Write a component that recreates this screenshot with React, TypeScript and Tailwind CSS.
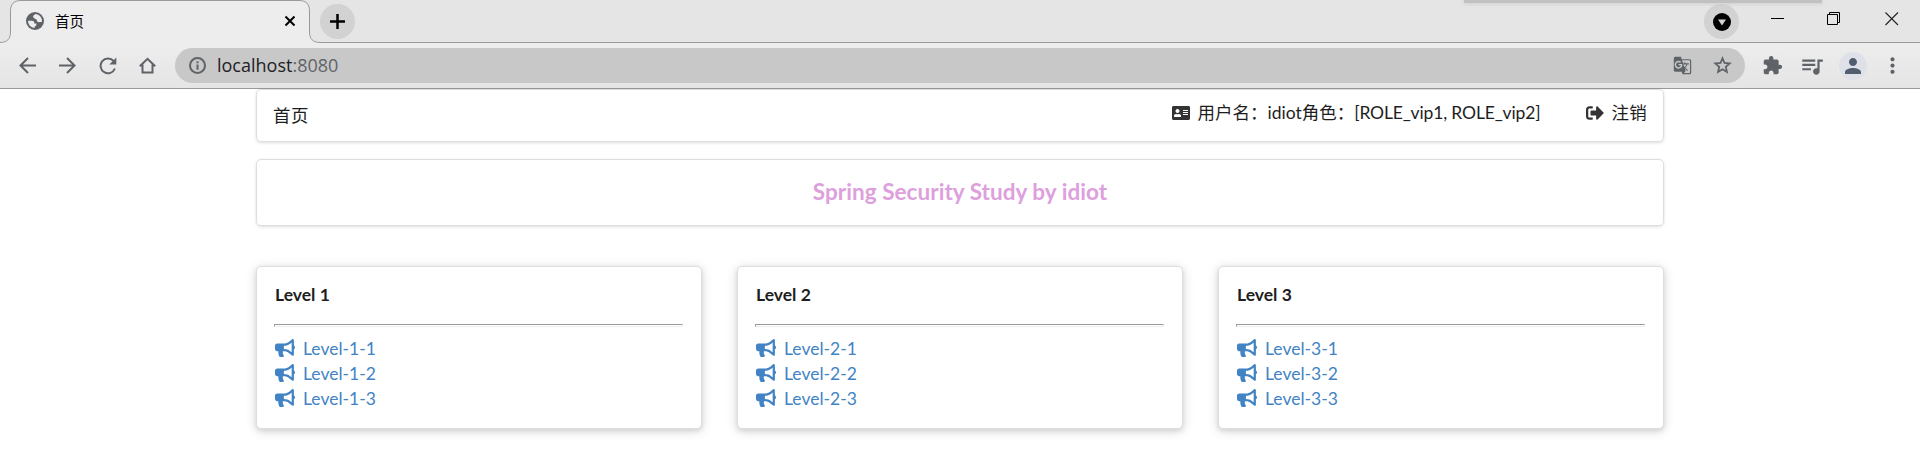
import React from "react";
import { FaAddressCard, FaBullhorn, FaSignOutAlt } from "react-icons/fa";
import {
  MdExtension,
  MdGTranslate,
  MdMoreVert,
  MdPerson,
  MdQueueMusic,
} from "react-icons/md";

const levels = [1, 2, 3];

function TabStrip() {
  return (
    <div className="relative flex h-[43px] shrink-0 bg-[#e5e5e5]">
      <svg className="absolute inset-0" width="1920" height="43" fill="none">
        <path
          d="M-2 42.5H0C7 42.5 10.5 39 10.5 32V11C10.5 4 14 .5 21 .5H299C306 .5 309.500 4 309.500 11V32C309.500 39 313 42.500 320 42.500H1922V50H-2Z"
          fill="#ededed"
          stroke="#999999"
        />
      </svg>
      <div className="relative flex w-[310px] items-center pl-[26px]">
        <svg className="-mt-0.5" width="18" height="18">
          <circle cx="9" cy="9" r="9" fill="#5f6368" />
          <path
            d="M2 8.800H5.800C7.900 8.800 8.500 10 8.300 11.400H10.400V13.300C9.500 13.800 8.700 14.800 8.500 16A7 7 0 0 1 2 8.800ZM9.500 2C8 3 6.600 3.800 7.200 5.400C8.500 5.200 8.300 7.300 10.400 7.300C10.800 9 11.600 10.700 13 10.300C14.200 9.800 15.200 10.200 16 9.800A7 7 0 0 0 9.500 2Z"
            fill="#ededed"
          />
        </svg>
        <span className="ml-[11px] mt-px text-[14.5px] leading-5 text-black">首页</span>
        <svg className="-mt-px ml-auto mr-[14px]" width="12" height="12" stroke="#000" strokeWidth="2">
          <path d="M1.500 1.500 10.500 10.500M10.500 1.500 1.500 10.500" />
        </svg>
      </div>
      <div className="relative ml-[10px] mt-1 flex size-[35px] items-center justify-center rounded-full bg-[#d2d2d2]">
        <svg width="15" height="15" stroke="#000" strokeWidth="2.500">
          <path d="M7.500 0V15M0 7.500H15" />
        </svg>
      </div>
      <div className="relative ml-auto mr-[32px] mt-1 flex size-[35px] items-center justify-center rounded-full bg-[#d2d2d2]">
        <svg width="18" height="18">
          <circle cx="9" cy="9" r="9" fill="#000" />
          <path d="M5 6.500H13L9 12.500Z" fill="#d2d2d2" />
        </svg>
      </div>
      <div className="relative mt-3 flex pr-[21px]">
        <svg width="13" height="14" stroke="#000">
          <path d="M0 6.500H13" />
        </svg>
        <svg className="ml-[43px]" width="14" height="14" fill="none" stroke="#000">
          <path d="M.5 2.500H10.500V12.500H.5ZM2.500 2.500V.5H12.500V10.500H11" />
        </svg>
        <svg className="ml-[44px]" width="14" height="14" stroke="#222" strokeWidth="1.100">
          <path d="M.5 .5 13 13M13 .5 .5 13" />
        </svg>
      </div>
      <div className="absolute left-[1464px] top-0 h-[3px] w-[358px] bg-[#c1c1c1] shadow-[0_0_4px_#c1c1c1]" />
    </div>
  );
}

function Toolbar() {
  return (
    <div className="flex h-[46px] shrink-0 items-center border-b border-[#999999] bg-linear-to-b from-[#ededed] to-[#e5e5e5] text-[#5f6368]">
      <svg className="ml-[19px]" width="17" height="17" fill="none" stroke="currentColor" strokeWidth="2">
        <path d="M17 8.500H2M9 1 1.500 8.500 9 16" />
      </svg>
      <svg className="ml-[23px]" width="17" height="17" fill="none" stroke="currentColor" strokeWidth="2">
        <path d="M0 8.500H15M8 1 15.500 8.500 8 16" />
      </svg>
      <svg className="ml-[23px]" width="18" height="18" fill="none" stroke="currentColor" strokeWidth="2">
        <path d="M14.600 4A7.400 7.400 0 1 0 15.900 11.500" />
        <path d="M17.300 .5V7.500H10.300Z" fill="currentColor" stroke="none" />
      </svg>
      <svg className="ml-[22px]" width="18" height="18" fill="none" stroke="currentColor" strokeWidth="2">
        <path d="M.8 9.300 8.500 1.800 16.200 9.300M3.500 7.500V15.500H13.500V7.500" />
      </svg>
      <div className="ml-[18px] flex h-[35px] w-[1570px] items-center rounded-full bg-[#c8c8c8] pl-[14px]">
        <svg width="17" height="17" fill="none" stroke="currentColor" strokeWidth="2">
          <circle cx="8.500" cy="8.500" r="7.500" />
          <path d="M8.500 4.300V6.200M8.500 7.500V12.700" />
        </svg>
        <span className="ml-[11px] font-['Open_Sans','Noto_Sans',sans-serif] text-[18px] text-[#5f6368]">
          <span className="text-[#202124]">localhost</span>:8080
        </span>
        <MdGTranslate className="ml-auto size-[19px]" />
        <svg className="ml-[20px] mr-[12px]" width="21" height="21" viewBox="0 0 21 21" fill="none" stroke="currentColor" strokeWidth="1.800">
          <path d="M10.500 3.300 12.500 8 17.700 8.500 13.800 11.900 14.900 17 10.500 14.300 6.100 17 7.200 11.900 3.300 8.500 8.500 8Z" />
        </svg>
      </div>
      <MdExtension className="ml-[17px] size-[21px]" />
      <MdQueueMusic className="ml-[16px] size-[26px]" />
      <div className="ml-[14px] flex size-7 items-center justify-center rounded-full bg-[#dee1e8]">
        <MdPerson className="size-[24px] text-[#525d70]" />
      </div>
      <MdMoreVert className="ml-[13px] size-[25px]" />
    </div>
  );
}

function LevelCard({ level }: { level: number }) {
  return (
    <section className="h-[163px] rounded-[5px] border border-[#dededf] bg-white pl-[17px] pr-[18px] pt-4 shadow-[0_2px_5px_rgba(34,36,38,0.12),0_2px_12px_rgba(34,36,38,0.15)]">
      <h5 className="ml-px h-6 text-[17.5px] font-bold leading-[23px]">Level {level}</h5>
      <hr className="mt-[17px] h-[3px] border border-b-[#eeeeee] border-l-[#9a9a9a] border-r-[#eeeeee] border-t-[#9a9a9a]" />
      <ul className="mt-[9px] text-[#4183c4]">
        {levels.map((item) => (
          <li key={item} className="flex h-[25px] items-center">
            <FaBullhorn className="-mt-px ml-px h-[18px] w-5" />
            <a className="ml-2 leading-[25px]">
              Level-{level}-{item}
            </a>
          </li>
        ))}
      </ul>
    </section>
  );
}

export default function App() {
  return (
    <div className="flex h-[465px] flex-col overflow-hidden bg-white font-[Lato,'Noto_Sans_CJK_SC',sans-serif] text-[17.5px] text-[#1e1e1e]">
      <TabStrip />
      <Toolbar />
      <main className="mx-auto w-[1408px]">
        <nav className="flex h-[53px] rounded-[5px] border border-[#dededf] px-[16px] shadow-[0_1px_3px_rgba(34,36,38,0.15)]">
          <span className="mt-[13px] leading-[25px] tracking-[0.5px]">首页</span>
          <div className="ml-auto mt-[11px] flex h-[25px] items-center">
            <FaAddressCard className="-mt-0.5 size-[18px] text-[#333333]" />
            <span className="ml-[7px] whitespace-nowrap">
              用户名：idiot角色：<span className="tracking-[-0.15px]">[ROLE_vip1, ROLE_vip2]</span>
            </span>
            <FaSignOutAlt className="-mt-0.5 ml-[46px] size-[18px] text-[#333333]" />
            <span className="ml-[7px] tracking-[0.3px]">注销</span>
          </div>
        </nav>
        <header className="mt-[17px] flex h-[67px] justify-center rounded-[5px] border border-[#dededf] pt-[17px] shadow-[0_1px_3px_rgba(34,36,38,0.15)]">
          <h3 className="text-[22.5px] font-bold leading-[29px] tracking-[0.04px] text-[#dda0dd]">
            Spring Security Study by idiot
          </h3>
        </header>
        <div className="mt-10 grid grid-cols-3 gap-[35px]">
          {levels.map((level) => (
            <LevelCard key={level} level={level} />
          ))}
        </div>
      </main>
    </div>
  );
}
